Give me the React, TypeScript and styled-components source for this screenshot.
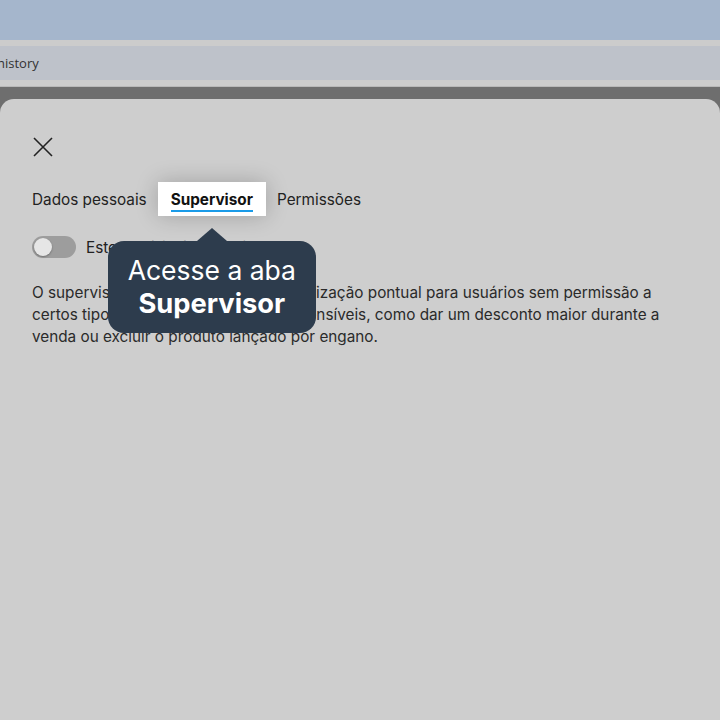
import React from "react";
import styled, {createGlobalStyle} from "styled-components";

const tabs = ["Dados pessoais", "Supervisor", "Permissões"];

const App = () => {
	const active = 1;
	return (
		<>
			<GlobalStyle/>
			<TopBand/>
			<Strip/>
			<AddressBar>history</AddressBar>
			<Strip/>
			<Backdrop>
				<Panel>
					<CloseButton aria-label="Fechar">
						<svg width="20" height="20" viewBox="0 0 20 20">
							<path d="M1 1 L19 19 M19 1 L1 19" stroke="#222" strokeWidth="1.6" fill="none"/>
						</svg>
					</CloseButton>
					<TabRow>
						{tabs.map((t, i) => (
							<Tab key={t} $active={i === active}>
								<TabLabel $active={i === active}>{t}</TabLabel>
								{i === active && (
									<Tooltip>
										<Arrow/>
										<Bubble>
											<span>Acesse a aba</span>
											<strong>Supervisor</strong>
										</Bubble>
									</Tooltip>
								)}
							</Tab>
						))}
					</TabRow>
					<ToggleRow>
						<Track><Knob/></Track>
						<ToggleLabel>Este usuário é supervisor</ToggleLabel>
					</ToggleRow>
					<Description>
						O supervisor pode conceder uma autorização pontual para usuários sem permissão a<br/>
						certos tipos de rotinas consideradas sensíveis, como dar um desconto maior durante a<br/>
						venda ou excluir o produto lançado por engano.
					</Description>
				</Panel>
			</Backdrop>
		</>
	)
}

export default App


const GlobalStyle = createGlobalStyle`
  html, body {
    margin: 0;
    padding: 0;
    background: #cecece;
    font-family: Inter, "Noto Sans", sans-serif;
    overflow: hidden;
  }
`

const TopBand = styled.div`
  height: 40px;
  background: #a5b6cc;
`

const Strip = styled.div`
  height: 6px;
  background: #cccccc;
`

const AddressBar = styled.div`
  height: 34px;
  background: #bec2ca;
  display: flex;
  align-items: center;
  margin-left: -3px;
  font-family: "Open Sans", sans-serif;
  font-size: 13px;
  color: #333;
`

const Backdrop = styled.div`
  border-top: 1px solid #b8b8b8;
  background: #6e6e6e;
  padding-top: 12px;
`

const Panel = styled.div`
  background: #cecece;
  border-radius: 14px 14px 0 0;
  min-height: 621px;
  padding: 38px 32px 0;
  box-sizing: border-box;
`

const CloseButton = styled.button`
  display: block;
  width: 20px;
  height: 20px;
  padding: 0;
  margin-left: 1px;
  border: none;
  background: none;
`

const TabRow = styled.div`
  display: flex;
  margin: 25px 0 0 -13px;
`

const Tab = styled.div<{ $active: boolean }>`
  position: relative;
  height: 34px;
  padding: 0 ${({$active}) => $active ? "13px" : "11px"};
  box-sizing: border-box;
  display: flex;
  align-items: center;
  background: ${({$active}) => $active ? "#ffffff" : "transparent"};
  box-shadow: ${({$active}) => $active ? "0 0 22px rgba(0, 0, 0, 0.22)" : "none"};
  z-index: ${({$active}) => $active ? 2 : 0};

  &:first-child {
    padding-left: 13px;
  }
`

const TabLabel = styled.span<{ $active: boolean }>`
  font-size: 15.3px;
  font-weight: ${({$active}) => $active ? 700 : 400};
  color: ${({$active}) => $active ? "#111" : "#222"};
  padding: 4px 0 1px;
  border-bottom: 2px solid ${({$active}) => $active ? "#1a9be8" : "transparent"};
`

const Tooltip = styled.div`
  position: absolute;
  top: 46px;
  left: 50%;
  transform: translateX(-50%);
  display: flex;
  flex-direction: column;
  align-items: center;
`

const Arrow = styled.div`
  width: 0;
  height: 0;
  border-left: 15px solid transparent;
  border-right: 15px solid transparent;
  border-bottom: 13px solid #2d3c4d;
`

const Bubble = styled.div`
  width: 208px;
  height: 92px;
  box-sizing: border-box;
  background: #2d3c4d;
  border-radius: 16px;
  color: #fff;
  display: flex;
  flex-direction: column;
  align-items: center;
  justify-content: center;
  line-height: 33px;

  span {
    font-size: 26.5px;
    font-weight: 400;
  }

  strong {
    font-size: 27.3px;
    font-weight: 700;
  }
`

const ToggleRow = styled.div`
  display: flex;
  align-items: center;
  gap: 10px;
  margin-top: 20px;
`

const Track = styled.div`
  width: 44px;
  height: 22px;
  border-radius: 11px;
  background: #9d9d9d;
  padding: 2px;
  box-sizing: border-box;
  display: flex;
  align-items: center;
`

const Knob = styled.div`
  width: 18px;
  height: 18px;
  border-radius: 50%;
  background: #e6e6e6;
  box-shadow: 0 1px 2px rgba(0, 0, 0, 0.3);
`

const ToggleLabel = styled.span`
  font-size: 15.3px;
  color: #222;
`

const Description = styled.p`
  margin: 24px 0 0;
  font-size: 15.3px;
  line-height: 22px;
  color: #2a2a2a;
  white-space: nowrap;
`
